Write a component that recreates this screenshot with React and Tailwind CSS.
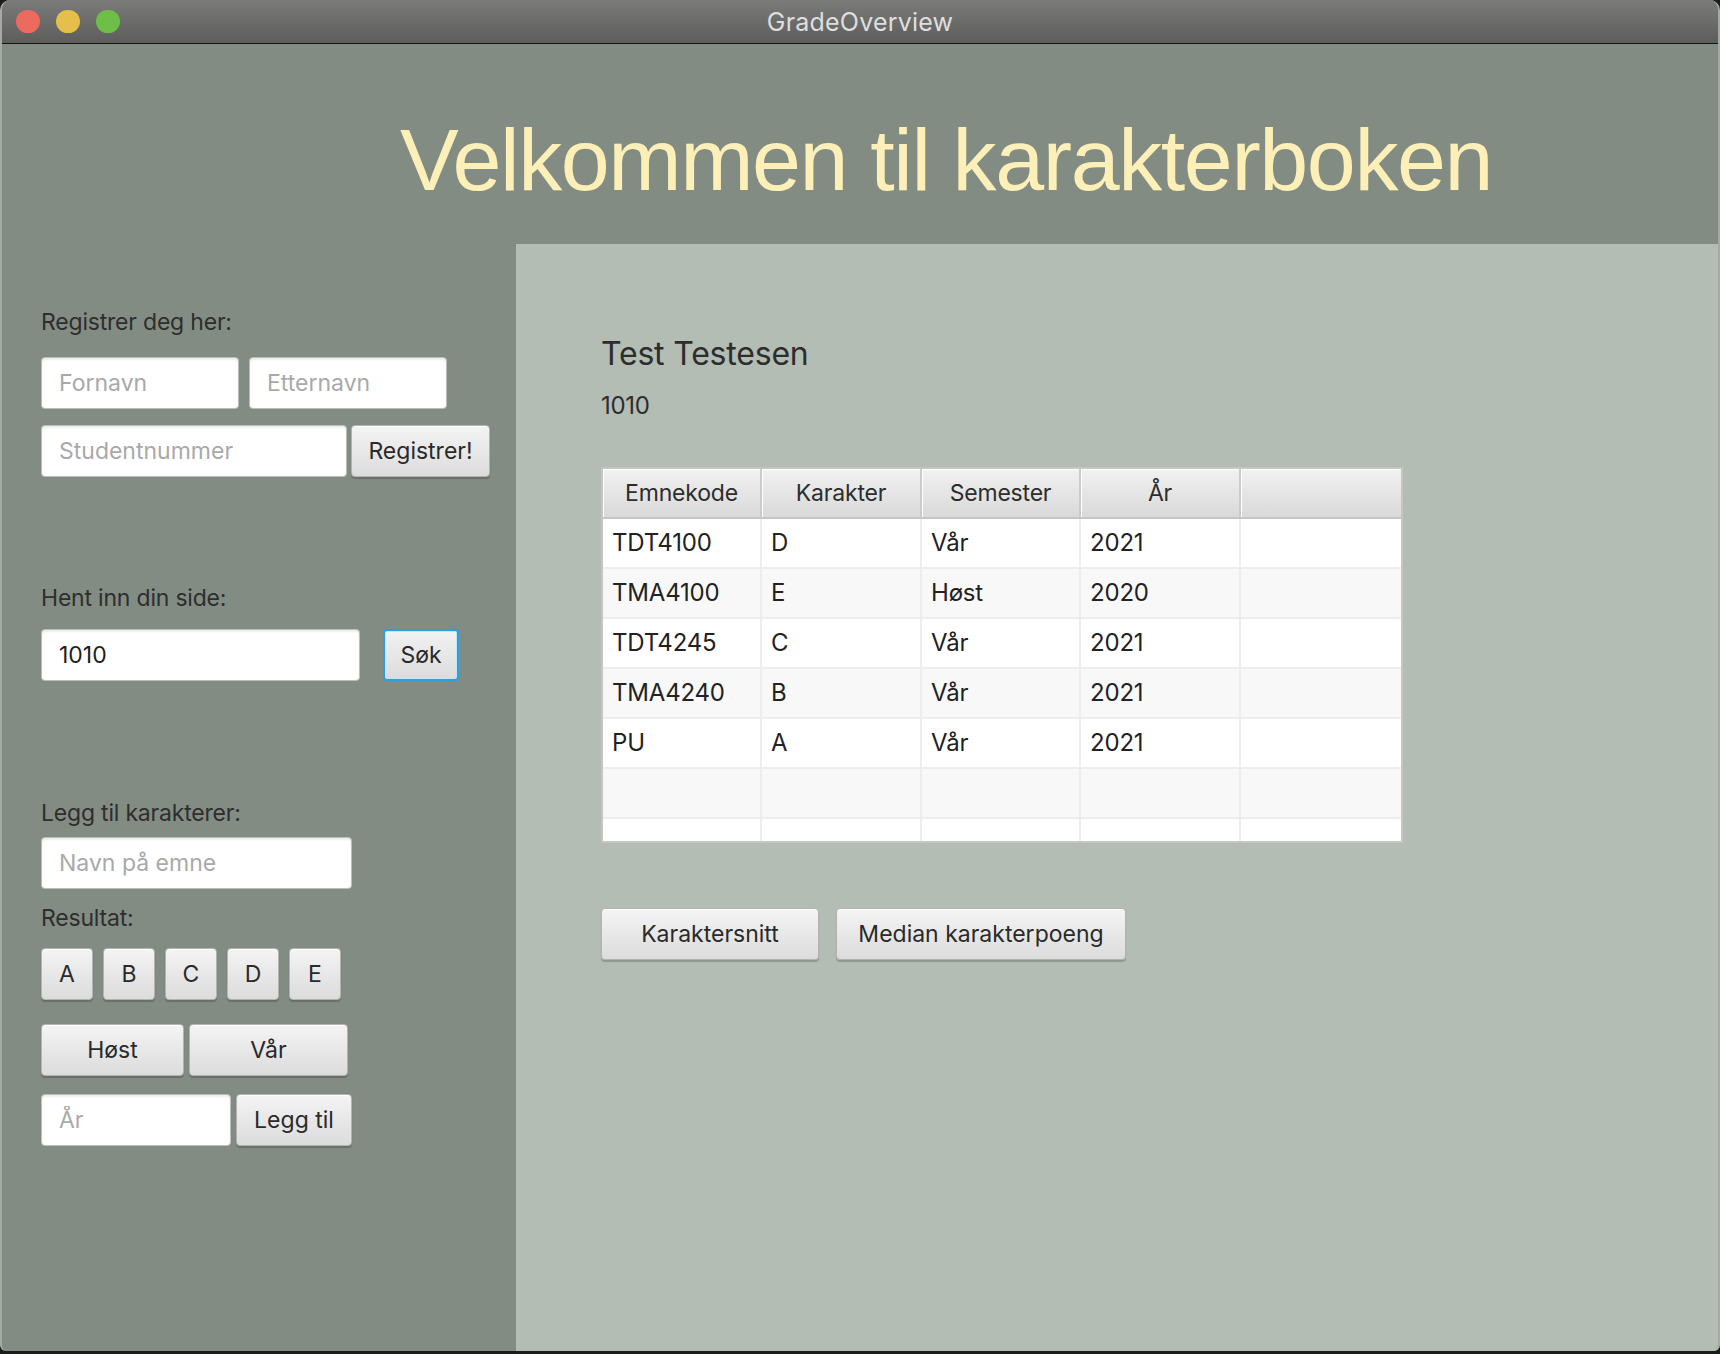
const ui = "font-['Inter',sans-serif]";

const grades = [
  { code: 'TDT4100', grade: 'D', semester: 'Vår', year: '2021' },
  { code: 'TMA4100', grade: 'E', semester: 'Høst', year: '2020' },
  { code: 'TDT4245', grade: 'C', semester: 'Vår', year: '2021' },
  { code: 'TMA4240', grade: 'B', semester: 'Vår', year: '2021' },
  { code: 'PU', grade: 'A', semester: 'Vår', year: '2021' },
  { code: '', grade: '', semester: '', year: '' },
  { code: '', grade: '', semester: '', year: '' },
];

const columns = ['Emnekode', 'Karakter', 'Semester', 'År', ''];

function FxButton({ children, className = '' }) {
  return (
    <button
      className={`h-[52px] shrink-0 rounded-[4px] border border-[#b3b3b3] bg-linear-to-b from-[#f4f4f4] to-[#dcdcdc] text-[23px] text-[#2a2a2a] shadow-[0_2px_1px_rgba(0,0,0,0.2),inset_0_1px_0_#ffffff] ${className}`}
    >
      {children}
    </button>
  );
}

function FxInput({ placeholder, value, className = '' }) {
  return (
    <input
      readOnly
      placeholder={placeholder}
      defaultValue={value}
      className={`h-[52px] shrink-0 rounded-[4px] border border-[#bdbdbd] bg-white pl-[17px] text-[23px] text-[#1e1e1e] placeholder:text-[#a9a9a9] shadow-[inset_0_2px_2px_rgba(0,0,0,0.07)] outline-none ${className}`}
    />
  );
}

function Label({ children, className = '' }) {
  return <div className={`text-[23px] leading-[28px] tracking-[-0.2px] text-[#2e2e2e] ${className}`}>{children}</div>;
}

export default function App() {
  return (
    <div className={`h-[1354px] w-[1720px] overflow-hidden bg-[#1c1c1c] ${ui}`}>
      <div className="flex h-[1351px] flex-col overflow-hidden rounded-t-[10px] rounded-b-[6px] border-x-2 border-[#a3aba3] bg-[#838c83]">
        {/* title bar */}
        <div className="grid h-[44px] shrink-0 grid-cols-[1fr_auto_1fr] items-center border-b border-[#151515] bg-linear-to-b from-[#7b7b79] to-[#5d5d5d]">
          <div className="flex items-center gap-[16px] pl-[14px]">
            <span className="h-[23px] w-[24px] rounded-full bg-[#ed6a5e]" />
            <span className="h-[23px] w-[24px] rounded-full bg-[#e5bf49]" />
            <span className="h-[23px] w-[24px] rounded-full bg-[#6ebf47]" />
          </div>
          <div className="pt-[3px] text-[25px] tracking-[0.2px] text-[#dedede]">GradeOverview</div>
          <div />
        </div>

        {/* heading */}
        <div className="h-[200px] shrink-0 pl-[398px] pt-[72px]">
          <h1 className="font-['Liberation_Sans',Arial,sans-serif] text-[88px] leading-none tracking-[-1.4px] text-[#fcf0b8]">
            Velkommen til karakterboken
          </h1>
        </div>

        <div className="flex flex-1">
          {/* left column */}
          <div className="w-[514px] shrink-0 pl-[39px] pt-[64px]">
            <Label>Registrer deg her:</Label>
            <div className="mt-[21px] flex gap-[10px]">
              <FxInput placeholder="Fornavn" className="w-[198px]" />
              <FxInput placeholder="Etternavn" className="w-[198px]" />
            </div>
            <div className="mt-[16px] flex gap-[4px]">
              <FxInput placeholder="Studentnummer" className="w-[306px]" />
              <FxButton className="w-[139px]">Registrer!</FxButton>
            </div>

            <Label className="mt-[107px]">Hent inn din side:</Label>
            <div className="mt-[17px] flex gap-[23px]">
              <FxInput value="1010" className="w-[319px]" />
              <button className="h-[52px] w-[76px] rounded-[4px] border-2 border-[#2aa0dc] bg-linear-to-b from-[#f2f2f2] to-[#dcdcdc] text-[23px] text-[#2a2a2a] shadow-[inset_0_0_0_1px_#c6e4f3]">
                Søk
              </button>
            </div>

            <Label className="mt-[118px]">Legg til karakterer:</Label>
            <FxInput placeholder="Navn på emne" className="mt-[10px] w-[311px]" />
            <Label className="mt-[15px]">Resultat:</Label>
            <div className="mt-[16px] flex gap-[10px]">
              {['A', 'B', 'C', 'D', 'E'].map((g) => (
                <FxButton key={g} className="w-[52px]">{g}</FxButton>
              ))}
            </div>
            <div className="mt-[24px] flex gap-[5px]">
              <FxButton className="w-[143px]">Høst</FxButton>
              <FxButton className="w-[159px]">Vår</FxButton>
            </div>
            <div className="mt-[18px] flex gap-[5px]">
              <FxInput placeholder="År" className="w-[190px]" />
              <FxButton className="w-[116px]">Legg til</FxButton>
            </div>
          </div>

          {/* right panel */}
          <div className="flex-1 bg-[#b3bdb4] pl-[85px] pt-[90px]">
            <div className="text-[32px] leading-[39px] tracking-[-0.2px] text-[#2d2d2d]">Test Testesen</div>
            <div className="mt-[19px] text-[24px] leading-[28px] tracking-[-0.3px] text-[#2d2d2d]">1010</div>

            <div className="mt-[47px] h-[376px] w-[802px] overflow-hidden border-2 border-[#c5c5c5] bg-white">
              <div className="grid h-[50px] grid-cols-[159px_160px_159px_160px_1fr] border-b-2 border-[#c6c6c6]">
                {columns.map((c, i) => (
                  <div
                    key={i}
                    className={`flex items-center justify-center bg-linear-to-b from-[#f1f1f1] to-[#d9d9d9] text-[23px] tracking-[-0.2px] text-[#2d2d2d] shadow-[inset_1px_1px_0_#ffffff] ${i < 4 ? 'border-r-2 border-[#cbcbcb]' : ''}`}
                  >
                    {c}
                  </div>
                ))}
              </div>
              {grades.map((r, idx) => (
                <div
                  key={idx}
                  className={`grid h-[50px] grid-cols-[159px_160px_159px_160px_1fr] border-b-2 border-[#ededed] ${idx % 2 === 1 ? 'bg-[#f8f8f8]' : 'bg-white'}`}
                >
                  {[r.code, r.grade, r.semester, r.year, ''].map((v, i) => (
                    <div
                      key={i}
                      className={`flex items-center pl-[9px] text-[24px] tracking-[-0.2px] text-[#222222] ${i < 4 ? 'border-r-2 border-[#ededed]' : ''}`}
                    >
                      {v}
                    </div>
                  ))}
                </div>
              ))}
            </div>

            <div className="mt-[65px] flex gap-[17px]">
              <FxButton className="w-[218px]">Karaktersnitt</FxButton>
              <FxButton className="w-[290px]">Median karakterpoeng</FxButton>
            </div>
          </div>
        </div>
      </div>
    </div>
  );
}
